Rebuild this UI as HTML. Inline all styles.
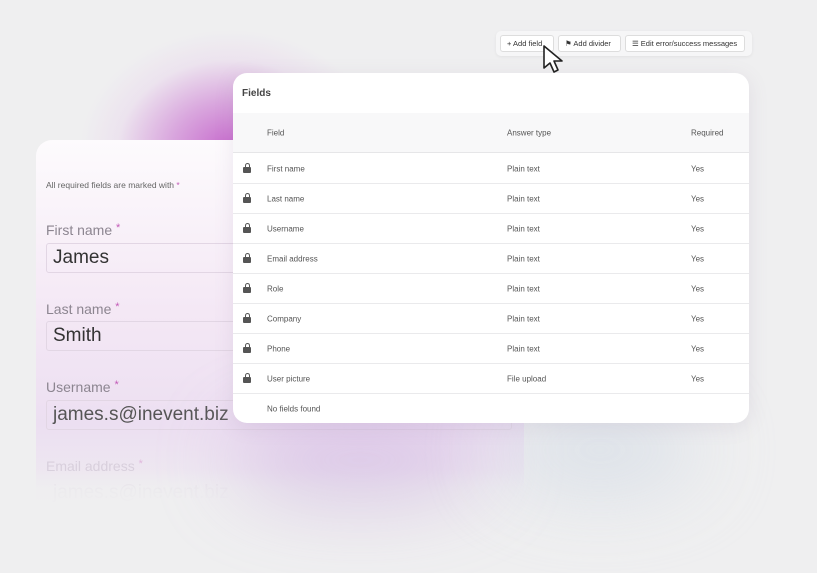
<!DOCTYPE html>
<html><head><meta charset="utf-8"><style>
*{box-sizing:border-box;margin:0;padding:0}
body{width:817px;height:573px;overflow:hidden;background:#efeff0;font-family:"Liberation Sans",sans-serif;position:relative}
.glow{position:absolute;border-radius:50%;filter:blur(40px)}
.left{position:absolute;left:36px;top:140px;width:488px;height:380px;border-radius:16px 16px 0 0;background:linear-gradient(180deg,#fdfbfd 0%,#f4e8f5 45%,#ecdff1 75%,#efeff0 100%);overflow:hidden}
.left .fade{position:absolute;left:0;right:0;top:330px;bottom:0;background:linear-gradient(180deg,rgba(239,239,240,0) 0%,rgba(239,239,240,.8) 40%,#efeff0 80%)}
.lbl{position:absolute;left:10px;color:#8c8590;font-size:14px}
.lbl b{color:#c25ab7;font-weight:normal;font-size:11px;vertical-align:top}
.inp{position:absolute;left:10px;width:466px;height:30px;border:1px solid #e2d6e4;border-radius:3px;font-size:19px;color:#333;padding:3px 6px}
.card{position:absolute;left:233px;top:73px;width:516px;height:350px;background:#fff;border-radius:14px;overflow:hidden;box-shadow:0 4px 20px rgba(120,100,140,.12)}
.card h3{position:absolute;left:9px;top:15px;font-size:10px;color:#444;font-weight:bold}
.hdr{position:absolute;left:0;right:0;top:40px;height:40px;background:#f8f8f9;border-bottom:1px solid #e6e6e8}
.row{position:absolute;left:0;right:0;height:30px;border-bottom:1px solid #eaeaec;font-size:8px;color:#555}
.row span,.hdr span{position:absolute;top:50%;transform:translateY(-50%);font-size:8px;color:#555}
.lock{position:absolute;left:10px;top:13px;width:8px;height:6px;background:#555;border-radius:1px}
.lock:before{content:"";position:absolute;left:1.5px;top:-4px;width:5px;height:5px;border:1.3px solid #555;border-bottom:none;border-radius:3px 3px 0 0;box-sizing:border-box}
.tb{position:absolute;left:496px;top:31px;width:256px;height:25px;background:#f6f6f7;border-radius:5px;box-shadow:0 1px 3px rgba(0,0,0,.06)}
.btn{position:absolute;top:4px;height:17px;border:1px solid #ddd;background:#fff;border-radius:3px;font-size:7.5px;color:#333;line-height:15px;padding-left:6px}
</style></head><body>
<div style="position:absolute;left:40px;top:0;width:360px;height:300px;background:radial-gradient(ellipse 150px 120px at 190px 150px,rgba(198,104,204,1) 0%,rgba(208,136,214,.7) 40%,rgba(230,200,235,.3) 75%,rgba(239,239,240,0) 100%)"></div>
<div class="left">
<div style="position:absolute;left:10px;top:40px;font-size:8.5px;color:#666">All required fields are marked with <span style="color:#c25ab7">*</span></div>
<div class="lbl" style="top:82px">First name <b>*</b></div>
<div class="inp" style="top:103px">James</div>
<div class="lbl" style="top:161px">Last name <b>*</b></div>
<div class="inp" style="top:181px">Smith</div>
<div class="lbl" style="top:239px">Username <b>*</b></div>
<div class="inp" style="top:260px;color:#555">james.s@inevent.biz</div>
<div class="lbl" style="top:318px;color:#d8cfdc">Email address <b style="color:#e0b8dc">*</b></div>
<div class="inp" style="top:338px;color:#e0d8e4;border-color:transparent">james.s@inevent.biz</div>
<div class="fade"></div>
</div>
<div class="glow" style="left:230px;top:420px;width:260px;height:80px;background:#c8a6dc;opacity:.55"></div>
<div class="glow" style="left:500px;top:410px;width:200px;height:80px;background:#d3dbe5;opacity:.8"></div>
<div class="card">
<h3>Fields</h3>
<div class="hdr"><span style="left:34px">Field</span><span style="left:274px">Answer type</span><span style="left:458px">Required</span></div>
<div class="row" style="top:81px"><i class="lock"></i><span style="left:34px">First name</span><span style="left:274px">Plain text</span><span style="left:458px">Yes</span></div>
<div class="row" style="top:111px"><i class="lock"></i><span style="left:34px">Last name</span><span style="left:274px">Plain text</span><span style="left:458px">Yes</span></div>
<div class="row" style="top:141px"><i class="lock"></i><span style="left:34px">Username</span><span style="left:274px">Plain text</span><span style="left:458px">Yes</span></div>
<div class="row" style="top:171px"><i class="lock"></i><span style="left:34px">Email address</span><span style="left:274px">Plain text</span><span style="left:458px">Yes</span></div>
<div class="row" style="top:201px"><i class="lock"></i><span style="left:34px">Role</span><span style="left:274px">Plain text</span><span style="left:458px">Yes</span></div>
<div class="row" style="top:231px"><i class="lock"></i><span style="left:34px">Company</span><span style="left:274px">Plain text</span><span style="left:458px">Yes</span></div>
<div class="row" style="top:261px"><i class="lock"></i><span style="left:34px">Phone</span><span style="left:274px">Plain text</span><span style="left:458px">Yes</span></div>
<div class="row" style="top:291px"><i class="lock"></i><span style="left:34px">User picture</span><span style="left:274px">File upload</span><span style="left:458px">Yes</span></div>
<div class="row" style="top:321px;border:none"><span style="left:34px">No fields found</span></div>
</div>
<div class="tb">
<div class="btn" style="left:4px;width:54px">+ Add field</div>
<div class="btn" style="left:62px;width:63px">&#9873; Add divider</div>
<div class="btn" style="left:129px;width:120px">&#9776; Edit error/success messages</div>
</div>
<svg style="position:absolute;left:541px;top:44px" width="30" height="34" viewBox="0 0 30 34"><path d="M3 2 L3 24 L9 19 L13 28 L17 26 L13 17 L21 17 Z" fill="#fff" stroke="#222" stroke-width="1.6" stroke-linejoin="round"/></svg>
</body></html>
